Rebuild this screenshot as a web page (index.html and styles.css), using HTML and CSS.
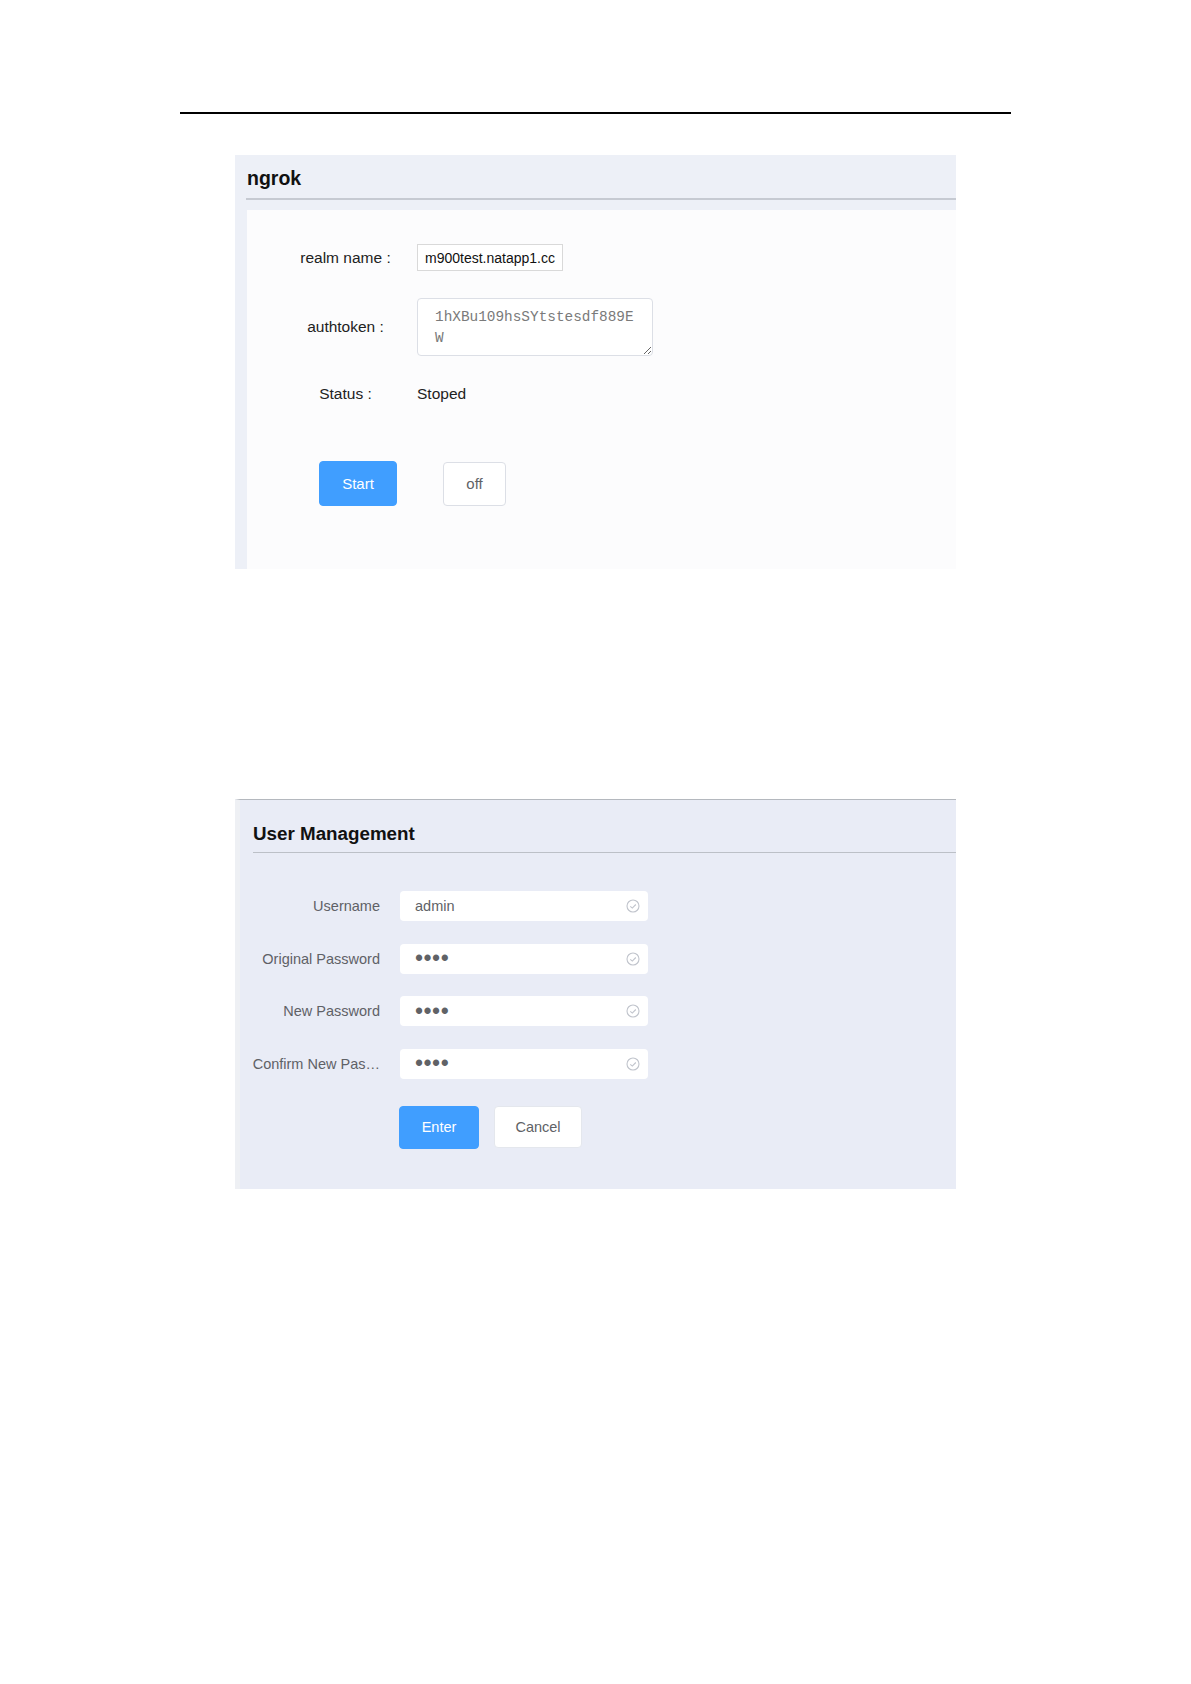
FILE: index.html
```html
<!DOCTYPE html>
<html lang="en">
<head>
  <meta charset="UTF-8" />
  <title>ngrok / User Management</title>
  <link rel="stylesheet" href="styles.css">
</head>
<body>
  <div class="page">
    <div class="rule"></div>

    <section class="panel ngrok">
      <div class="panel-head"><h2>ngrok</h2></div>
      <div class="panel-body">
        <div class="field-row">
          <label class="field-label" for="realm">realm name :</label>
          <input class="realm-input" id="realm" value="m900test.natapp1.cc" />
        </div>
        <div class="field-row">
          <label class="field-label" for="token">authtoken :</label>
          <textarea class="token" id="token" readonly>1hXBu109hsSYtstesdf889EW</textarea>
        </div>
        <div class="field-row status-row">
          <span class="field-label">Status :</span>
          <span class="status">Stoped</span>
        </div>
        <div class="actions">
          <button class="btn btn-start">Start</button>
          <button class="btn btn-off">off</button>
        </div>
      </div>
    </section>

    <section class="panel users">
      <div class="panel-head"><h2>User Management</h2></div>
      <div class="user-form">
        <div class="form-row">
          <span class="form-label">Username</span>
          <div class="form-input"><span>admin</span><svg class="ok" viewBox="0 0 14 14"><circle cx="7" cy="7" r="6"/><path d="M4.3 7.3l2 1.8 3.5-3.6"/></svg></div>
        </div>
        <div class="form-row">
          <span class="form-label">Original Password</span>
          <div class="form-input"><span class="dots">••••</span><svg class="ok" viewBox="0 0 14 14"><circle cx="7" cy="7" r="6"/><path d="M4.3 7.3l2 1.8 3.5-3.6"/></svg></div>
        </div>
        <div class="form-row">
          <span class="form-label">New Password</span>
          <div class="form-input"><span class="dots">••••</span><svg class="ok" viewBox="0 0 14 14"><circle cx="7" cy="7" r="6"/><path d="M4.3 7.3l2 1.8 3.5-3.6"/></svg></div>
        </div>
        <div class="form-row">
          <span class="form-label">Confirm New Pas…</span>
          <div class="form-input"><span class="dots">••••</span><svg class="ok" viewBox="0 0 14 14"><circle cx="7" cy="7" r="6"/><path d="M4.3 7.3l2 1.8 3.5-3.6"/></svg></div>
        </div>
        <div class="form-actions">
          <button class="btn btn-enter">Enter</button>
          <button class="btn btn-cancel">Cancel</button>
        </div>
      </div>
    </section>
  </div>
</body>
</html>
```

FILE: styles.css
```css
body {
  margin: 0;
  background: #ffffff;
  font-family: "Liberation Sans", Arial, sans-serif;
  color: #222;
}
.page {
  padding: 112px 0 120px;
}
.rule {
  margin-left: 180px;
  width: 831px;
  height: 2px;
  background: #000;
}
.panel {
  margin-left: 235px;
  width: 721px;
  box-sizing: border-box;
}
.panel h2 {
  margin: 0;
  font-weight: bold;
  color: #111;
}

/* ngrok */
.ngrok {
  margin-top: 41px;
  height: 414px;
  padding-left: 12px;
  background: #edf0f7;
}
.ngrok .panel-head {
  height: 45px;
  margin-left: -1px;
  padding: 4px 0 0 1px;
  box-sizing: border-box;
  display: flex;
  align-items: center;
  border-bottom: 2px solid #c6cad2;
}
.ngrok h2 {
  font-size: 19.5px;
}
.ngrok .panel-body {
  margin-top: 10px;
  height: 359px;
  box-sizing: border-box;
  padding: 34px 0 0 27px;
  background: #fcfcfd;
}
.field-row {
  display: flex;
  align-items: center;
}
.field-row + .field-row {
  margin-top: 27px;
}
.field-label {
  width: 143px;
  text-align: center;
  font-size: 15.5px;
  color: #222;
}
.status-row {
  line-height: 22px;
}
.status {
  font-size: 15.5px;
  color: #222;
}
.realm-input {
  width: 146px;
  height: 27px;
  box-sizing: border-box;
  padding: 0 0 0 7px;
  border: 1px solid #d9d9d9;
  background: #fff;
  font-family: inherit;
  font-size: 14px;
  color: #111;
}
.token {
  width: 236px;
  height: 58px;
  box-sizing: border-box;
  padding: 8px 15px 0 17px;
  border: 1px solid #dcdfe6;
  border-radius: 4px;
  background: #fff;
  font-family: "Liberation Mono", "Courier New", monospace;
  font-size: 14.4px;
  line-height: 21px;
  color: #7a7a7a;
  overflow: hidden;
  resize: both;
}
.actions {
  margin-top: 56px;
  padding-left: 45px;
  display: flex;
  align-items: center;
  gap: 46px;
}
.btn {
  box-sizing: border-box;
  border: 1px solid #dcdfe6;
  border-radius: 4px;
  background: #fff;
  color: #606266;
  font-family: inherit;
  font-size: 15px;
  cursor: pointer;
}
.btn-start {
  width: 78px;
  height: 45px;
  background: #409eff;
  border-color: #409eff;
  color: #fff;
}
.btn-off {
  width: 63px;
  height: 44px;
}

/* user management */
.users {
  margin-top: 230px;
  height: 390px;
  padding-left: 13px;
  background: #e9ecf6;
  border-top: 1px solid #b4b8be;
  border-left: 5px solid #eef0f4;
}
.users .panel-head {
  padding: 23px 0 7px;
  line-height: 22px;
  border-bottom: 1px solid #bcc0c7;
}
.users h2 {
  font-size: 18.8px;
}
.user-form {
  padding-top: 38px;
}
.form-row {
  display: flex;
  align-items: center;
  height: 30px;
}
.form-row + .form-row {
  margin-top: 22.5px;
}
.form-label {
  width: 128px;
  margin-left: -1px;
  padding-right: 20px;
  text-align: right;
  font-size: 14.5px;
  color: #5f6166;
  white-space: nowrap;
}
.form-input {
  width: 248px;
  height: 30px;
  box-sizing: border-box;
  padding: 0 8px 0 15px;
  display: flex;
  align-items: center;
  justify-content: space-between;
  background: #fff;
  border-radius: 4px;
  font-size: 14.5px;
  color: #606266;
}
.dots {
  font-size: 23px;
  letter-spacing: 0.5px;
  color: #606266;
}
.ok {
  width: 14px;
  height: 14px;
  fill: none;
  stroke: #c0c4cc;
  stroke-width: 1.1;
}
.form-actions {
  margin-top: 27px;
  padding-left: 146px;
  display: flex;
  align-items: center;
  gap: 15px;
}
.btn-enter {
  width: 80px;
  height: 43px;
  background: #409eff;
  border-color: #409eff;
  color: #fff;
  font-size: 14.5px;
}
.btn-cancel {
  width: 88px;
  height: 42px;
  border-color: #e4e7ed;
  font-size: 14.5px;
}
```
